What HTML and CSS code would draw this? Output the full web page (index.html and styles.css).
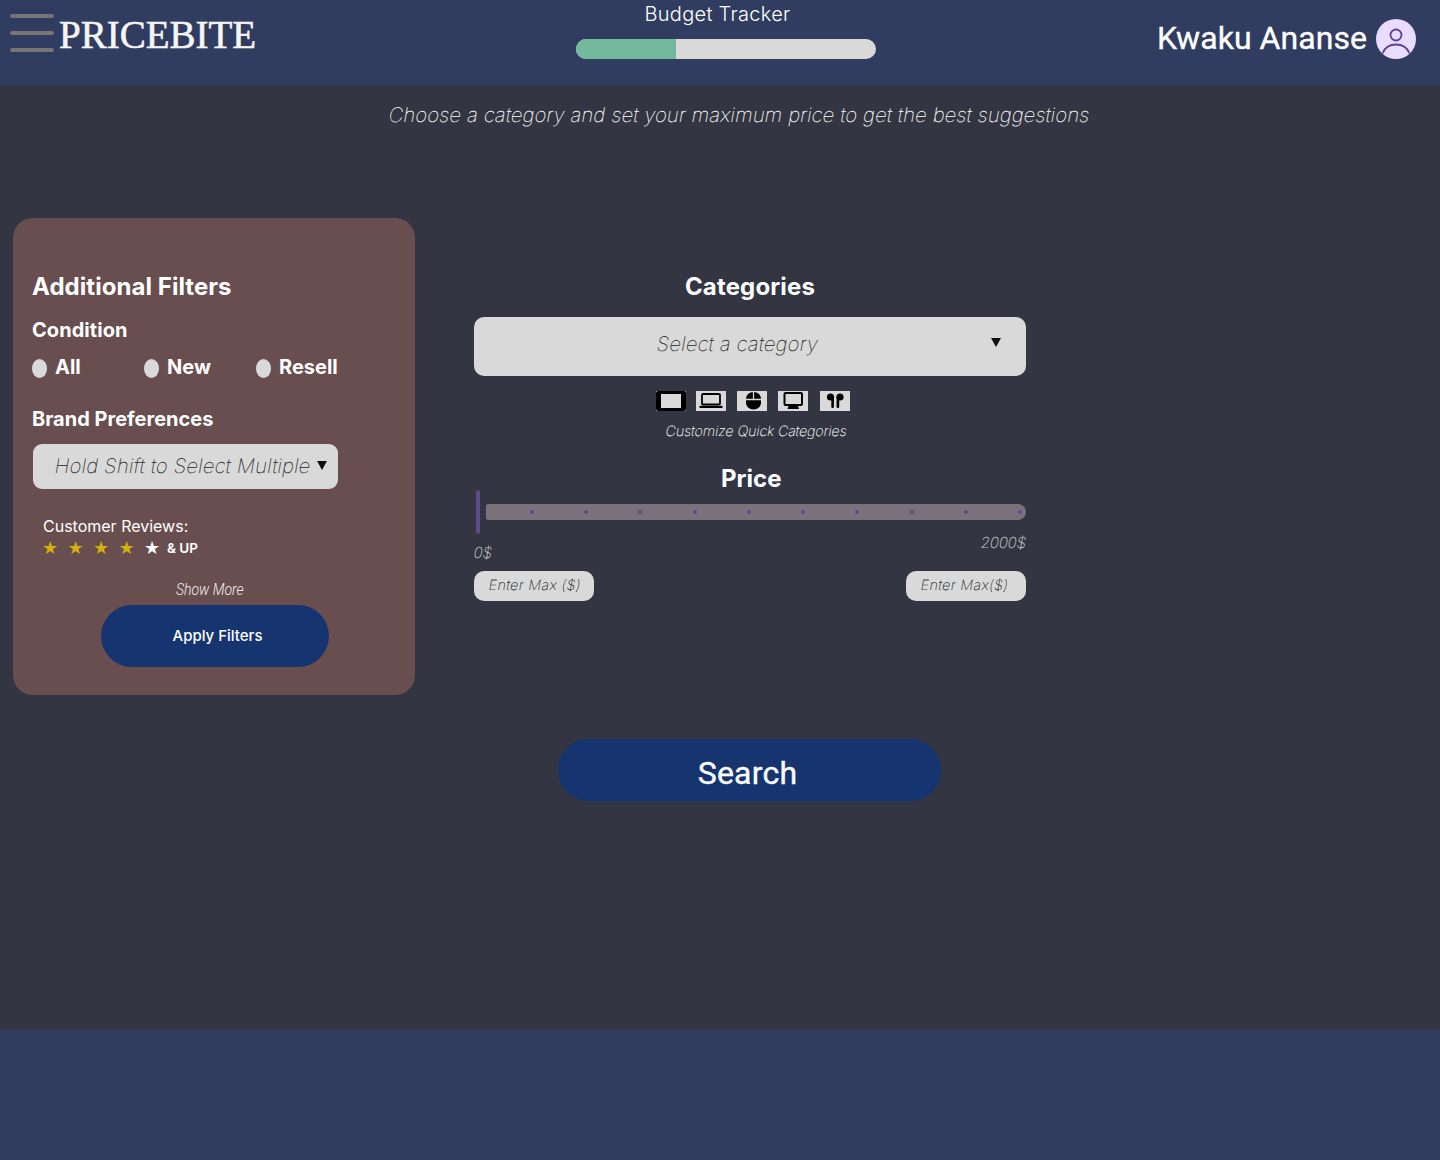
FILE: index.html
```html
<!DOCTYPE html>
<html lang="en">
<head>
<meta charset="utf-8">
<title>PriceBite</title>
<link rel="stylesheet" href="styles.css">
</head>
<body>
<header class="topbar">
  <div class="menu-icon"><span></span><span></span><span></span></div>
  <div class="logo">PRICEBITE</div>
  <div class="tracker">
    <div class="tracker-label">Budget Tracker</div>
    <div class="tracker-bar"><div class="tracker-fill"></div></div>
  </div>
  <div class="user">
    <span class="user-name">Kwaku Ananse</span>
    <svg class="avatar" viewBox="0 0 40 40" width="40" height="40">
      <circle cx="20" cy="20" r="20" fill="#eadcff"/>
      <circle cx="20" cy="16" r="5.5" fill="none" stroke="#5b3f99" stroke-width="1.8"/>
      <path d="M6.5 34.5 C9 28 14 25.5 20 25.5 C26 25.5 31 28 33.5 34.5" fill="none" stroke="#5b3f99" stroke-width="1.8"/>
    </svg>
  </div>
</header>
<main class="main">
  <p class="tagline"><span class="slant">Choose a category and set your maximum price to get the best suggestions</span></p>
  <div class="content">
    <aside class="filters">
      <h2 class="filters-title">Additional Filters</h2>
      <h3 class="condition-title">Condition</h3>
      <div class="radios">
        <div class="radio"><span class="radio-dot"></span>All</div>
        <div class="radio"><span class="radio-dot"></span>New</div>
        <div class="radio"><span class="radio-dot"></span>Resell</div>
      </div>
      <h3 class="brand-title">Brand Preferences</h3>
      <div class="brand-select"><span class="slant">Hold Shift to Select Multiple</span><i class="caret"></i></div>
      <div class="reviews-label">Customer Reviews:</div>
      <div class="stars">
        <span class="star gold">★</span><span class="star gold">★</span><span class="star gold">★</span><span class="star gold">★</span><span class="star white">★</span><span class="and-up">&amp; UP</span>
      </div>
      <div class="show-more"><span class="show-more-text">Show More</span></div>
      <button class="apply">Apply Filters</button>
    </aside>
    <section class="center">
      <h2 class="categories-title">Categories</h2>
      <div class="category-select"><span class="slant">Select a category</span><i class="caret caret-lg"></i></div>
      <div class="quick">
        <div class="quick-item">
          <svg viewBox="0 0 30 20" width="30" height="20"><path fill-rule="evenodd" d="M2 0h26a2 2 0 0 1 2 2v16a2 2 0 0 1-2 2H2a2 2 0 0 1-2-2V2a2 2 0 0 1 2-2zM5 3v14h20V3z" fill="#000"/></svg>
        </div>
        <div class="quick-item quick-second">
          <svg viewBox="0 0 30 20" width="30" height="20"><rect x="6" y="3" width="18" height="10.500" rx="1" fill="none" stroke="#000" stroke-width="1.800"/><path d="M3.500 14.800h23v2.200h-23z" fill="#000"/></svg>
        </div>
        <div class="quick-item">
          <svg viewBox="0 0 30 20" width="30" height="20"><path d="M16.500 1c-4.200 0-7.500 3-7.500 7v3.500c0 4 3.300 7 7.500 7s7.500-3 7.500-7V8c0-4-3.300-7-7.500-7z" fill="#000"/><path d="M16.500 1v7.500M9 8.500h15" stroke="#d9d9d9" stroke-width="1.300"/></svg>
        </div>
        <div class="quick-item">
          <svg viewBox="0 0 30 20" width="30" height="20"><rect x="6.500" y="2" width="17.500" height="12" rx="1" fill="none" stroke="#000" stroke-width="2"/><path d="M10.500 15h9.500l1 3h-11.500z" fill="#000"/></svg>
        </div>
        <div class="quick-item quick-last">
          <svg viewBox="0 0 30 20" width="30" height="20"><circle cx="10.500" cy="6" r="3.600" fill="#000"/><rect x="11.300" y="5" width="2.600" height="12" rx="1" fill="#000"/><circle cx="20" cy="6" r="3.600" fill="#000"/><rect x="16.600" y="5" width="2.600" height="12" rx="1" fill="#000"/></svg>
        </div>
      </div>
      <div class="quick-caption"><span class="slant">Customize Quick Categories</span></div>
      <h2 class="price-title">Price</h2>
      <div class="slider">
        <div class="slider-thumb"></div>
        <div class="slider-track">
          <i></i><i></i><i></i><i></i><i></i><i></i><i></i><i></i><i></i><i></i>
        </div>
      </div>
      <div class="price-labels"><span class="min-label slant">0$</span><span class="max-label slant">2000$</span></div>
      <div class="price-inputs">
        <div class="price-input"><span class="slant">Enter Max ($)</span></div>
        <div class="price-input"><span class="slant">Enter Max($)</span></div>
      </div>
    </section>
  </div>
  <div class="search-row"><button class="search">Search</button></div>
</main>
<footer class="footer"></footer>
</body>
</html>
```
FILE: styles.css
```css
* { box-sizing: border-box; }
html, body { margin: 0; padding: 0; }
body { width: 1440px; height: 1160px; overflow: hidden; background: #333642; color: #fff; font-family: Inter, "Liberation Sans", sans-serif; display: flex; flex-direction: column; }
h2, h3, p { margin: 0; }
button { border: 0; font: inherit; color: #fff; padding: 0; }
.slant { display: inline-block; transform: skewX(-10deg); -webkit-text-stroke: 0.2px currentColor; }

.topbar { height: 85px; flex: none; background: #303c60; display: flex; align-items: flex-start; }
.menu-icon { width: 44px; margin: 14px 0 0 10px; display: flex; flex-direction: column; gap: 13px; }
.menu-icon span { height: 4px; border-radius: 2px; background: #757575; }
.logo { width: 205px; margin: 14px 0 0 5px; font-family: "Liberation Serif", serif; font-size: 39px; line-height: 42px; color: #f5f5f5; font-weight: 400; -webkit-text-stroke: 0.6px #f5f5f5; white-space: nowrap; }
.tracker { width: 300px; margin: 2px 0 0 312px; }
.tracker-label { width: 283px; text-align: center; font-size: 20px; line-height: 24px; font-weight: 300; letter-spacing: 0.3px; }
.tracker-bar { margin-top: 13px; height: 20px; border-radius: 10px; background: #d9d9d9; overflow: hidden; }
.tracker-fill { width: 100px; height: 100%; background: #73b99c; }
.user { margin: 19px 0 0 auto; padding-right: 24px; display: flex; align-items: center; gap: 9px; }
.user-name { font-family: Roboto, sans-serif; font-size: 32px; line-height: 38px; font-weight: 400; letter-spacing: 0.05px; -webkit-text-stroke: 0.35px #fff; position: relative; top: -1px; }
.avatar { display: block; }

.main { height: 945px; flex: none; background: #333642; }
.tagline { padding: 18px 0 0 389px; font-size: 20px; line-height: 24px; font-weight: 100; letter-spacing: 0.31px; color: #fff; white-space: nowrap; }
.content { display: flex; align-items: flex-start; margin-top: 91px; padding-left: 13px; }

.filters { width: 402px; height: 477px; background: #684e4e; border-radius: 20px; padding: 54px 19px 0; }
.filters-title { font-size: 24px; line-height: 29px; font-weight: 700; letter-spacing: 0.05px; }
.condition-title { margin-top: 17px; font-size: 20px; line-height: 24px; font-weight: 700; letter-spacing: 0.05px; }
.radios { display: flex; margin-top: 13px; }
.radio { width: 112px; display: flex; align-items: center; gap: 8px; font-size: 20px; line-height: 24px; font-weight: 700; }
.radio-dot { width: 15px; height: 19px; border-radius: 50%; background: #d9d9d9; flex: none; position: relative; top: 1px; }
.brand-title { margin-top: 28px; font-size: 20px; line-height: 24px; font-weight: 700; }
.brand-select { margin: 13px 0 0 1px; width: 305px; height: 45px; background: #d9d9d9; border-radius: 9px; padding: 0 11px 2px 22px; display: flex; align-items: center; justify-content: space-between; font-size: 20px; font-weight: 100; color: #222; letter-spacing: 0.35px; white-space: nowrap; }
.caret { width: 0; height: 0; border-left: 5.500px solid transparent; border-right: 5.500px solid transparent; border-top: 9px solid #111; flex: none; }
.reviews-label { margin: 27px 0 0 11px; font-size: 16px; line-height: 20px; font-weight: 400; }
.stars { margin: 2px 0 0 10px; display: flex; align-items: center; height: 20px; }
.star { width: 25.500px; font-family: "DejaVu Sans", sans-serif; font-size: 18px; line-height: 20px; }
.gold { color: #d5b10f; }
.white { color: #fff; width: 23px; }
.and-up { font-size: 13.500px; font-weight: 600; }
.show-more { margin: 22px 0 0 144px; font-family: Roboto, sans-serif; font-size: 16px; line-height: 20px; font-style: italic; font-weight: 300; color: #eee; }
.show-more-text { display: inline-block; transform: scaleX(0.875); transform-origin: left center; }
.apply { display: block; margin: 5px 0 0 69px; width: 228px; height: 62px; border-radius: 31px; background: #163570; font-size: 15px; font-weight: 500; padding: 0 0 2px 5px; }

.center { width: 552px; margin: 54px 0 0 59px; display: flex; flex-direction: column; }
.categories-title { text-align: center; font-size: 24px; line-height: 29px; font-weight: 700; letter-spacing: 0.15px; }
.category-select { position: relative; margin-top: 16px; height: 59px; background: #d9d9d9; border-radius: 10px; display: flex; align-items: center; justify-content: center; font-size: 20px; font-weight: 100; color: #222; letter-spacing: 0.37px; padding: 0 24px 6px 0; }
.category-select .caret { position: absolute; right: 25px; top: 21px; }
.quick { display: flex; gap: 11px; margin: 15px 0 0 182px; }
.quick-item { width: 30px; height: 20px; background: #d9d9d9; }
.quick-second { margin-left: -1px; }
.quick-last { margin-left: 1px; }
.quick-item svg { display: block; }
.quick-caption { margin-top: 12px; padding-left: 192px; font-size: 14px; line-height: 16px; font-weight: 100; letter-spacing: 0.1px; color: #fff; }
.price-title { margin-top: 25px; padding-left: 247px; font-size: 24px; line-height: 29px; font-weight: 700; }
.slider { display: flex; align-items: center; height: 44px; margin-top: -3px; padding-left: 2px; gap: 6px; }
.slider-thumb { width: 4px; height: 44px; border-radius: 2px; background: #5f4b8b; flex: none; }
.slider-track { flex: 1; height: 16px; border-radius: 2px 8px 8px 2px; background: #79717c; display: flex; justify-content: space-between; align-items: center; padding: 0 4px 0 44px; }
.slider-track i { width: 4px; height: 4px; border-radius: 50%; background: #5f4b8b; }
.price-labels { display: flex; justify-content: space-between; align-items: flex-start; font-size: 15px; line-height: 17px; font-weight: 100; color: #ddd; margin-top: -1px; height: 28px; }
.min-label { margin-top: 11px; }
.max-label { margin-top: 1px; }
.price-inputs { display: flex; justify-content: space-between; margin-top: 10px; }
.price-input { width: 120px; height: 30px; border-radius: 10px; background: #d9d9d9; text-align: center; font-size: 14px; line-height: 28px; font-weight: 100; color: #222; letter-spacing: 0.6px; padding-left: 3px; }
.price-input:last-child { padding: 0 3px 0 0; }

.search-row { margin-top: 44px; padding-left: 558px; }
.search { display: block; width: 383px; height: 62px; border-radius: 31px; background: #163570; font-family: Roboto, sans-serif; font-size: 32px; font-weight: 400; letter-spacing: 0.2px; -webkit-text-stroke: 0.35px #fff; padding: 6px 4px 0 0; }

.footer { height: 130px; flex: none; background: #303c60; }
```
